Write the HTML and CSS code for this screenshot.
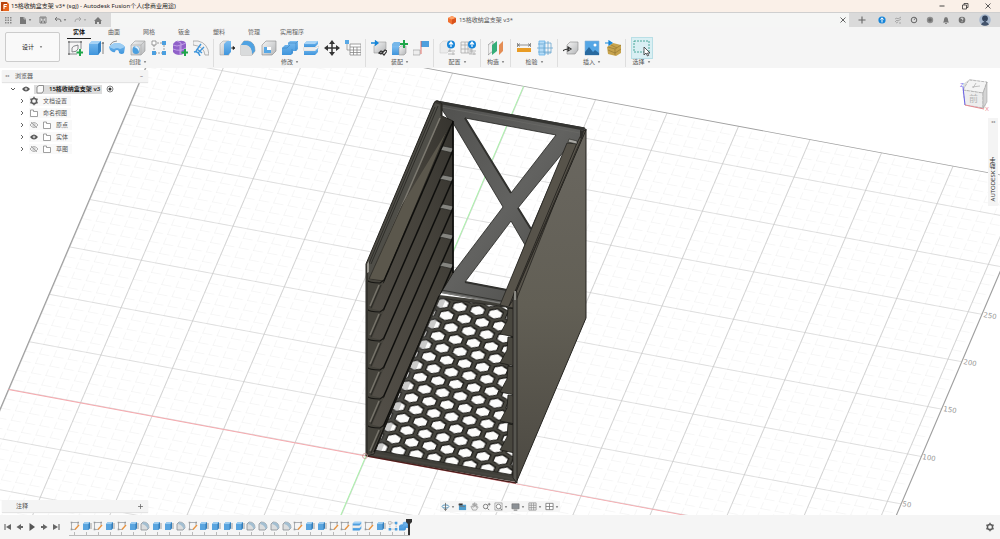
FILE: index.html
```html
<!DOCTYPE html>
<html lang="zh-CN">
<head>
<meta charset="utf-8">
<title>15格收纳盒支架 v3* (sgj) - Autodesk Fusion</title>
<link rel="stylesheet" href="styles.css">
</head>
<body>
<svg class="sprite" aria-hidden="true">
  <defs>
    <linearGradient id="gBlue" x1="0" y1="0" x2="0" y2="1"><stop offset="0" stop-color="#7dbdf0"/><stop offset="1" stop-color="#3f95dc"/></linearGradient>
    <linearGradient id="gGray" x1="0" y1="0" x2="1" y2="1"><stop offset="0" stop-color="#f4f4f4"/><stop offset="1" stop-color="#b4b6b8"/></linearGradient>
  </defs>
  <symbol id="i-sketch" viewBox="0 0 16 16"><path d="M2 2h12v7M2 2v12h8M5 12V8q0-2 6-3v4q-1 3-6 3z" fill="none" stroke="#6c6f73" stroke-width=".8"/><path d="M1 1h2v2H1zM13 1h2v2h-2zM1 13h2v2H1z" fill="#888"/><path d="M13 9v7M9.500 12.500h7" stroke="#1fa64a" stroke-width="2"/></symbol>
  <symbol id="i-extrude" viewBox="0 0 16 16"><path d="M1 4l3-3h9v10l-3 4H1z" fill="url(#gBlue)"/><path d="M1 4h9l3-3H4z" fill="#a5d2f5"/><path d="M10 4v11l3-4V1z" fill="#3482c5"/><path d="M15 14V3M14 4L15 2l1 2" stroke="#555" stroke-width=".7" fill="none"/></symbol>
  <symbol id="i-revolve" viewBox="0 0 16 16"><path d="M0 7q3-4 8-4t8 4l-1 6q-2 2-5 0 0-3-2-3t-2 2q-2 1-5-2z" fill="url(#gBlue)"/><path d="M0 7q3-4 8-4t8 4l-5 2q-3-2-6 0z" fill="#9ccdf3"/><path d="M1 5q2-4 7-4" fill="none" stroke="#666" stroke-width=".7"/></symbol>
  <symbol id="i-hole" viewBox="0 0 16 16"><path d="M1 5l4-4h10v10l-4 4H1z" fill="url(#gGray)" stroke="#999" stroke-width=".6"/><path d="M1 5h10v10M11 5l4-4" fill="none" stroke="#aaa" stroke-width=".6"/><ellipse cx="6" cy="10" rx="3.500" ry="4" fill="#4b9fdf"/><path d="M4 7q4 1 5 5 1-6-3-6z" fill="#e1eef8"/></symbol>
  <symbol id="i-pattern" viewBox="0 0 16 16"><path d="M3 3h10v10H3z" fill="none" stroke="#777" stroke-width=".7" stroke-dasharray="2 1"/><path d="M1 1h4v4H1z" fill="#fff" stroke="#777" stroke-width=".7"/><path d="M11 1h4v4h-4zM1 11h4v4H1zM11 11h4v4h-4z" fill="#4b9fdf"/></symbol>
  <symbol id="i-form" viewBox="0 0 16 16"><path d="M1 4q3-4 6-3 5-1 7 2v8q-3 4-6 4-5 0-7-3z" fill="#9061c9"/><path d="M1 5q4 2 8 0l5-2M8 6v9M5 1l4 2v12M1 9q7 3 13-1" fill="none" stroke="#ceb0ee" stroke-width=".8"/><path d="M13 9v7M9.500 12.500h7" stroke="#1fa64a" stroke-width="2"/></symbol>
  <symbol id="i-flange" viewBox="0 0 16 16"><path d="M0 1h5q10 2 11 14h-4Q11 6 0 5z" fill="#f2f2f2" stroke="#999" stroke-width=".7"/><path d="M1 12q4-1 6 4M3 11l5-7M5 13l6-6M4 9l5 4" fill="none" stroke="#3f96dc" stroke-width="1.400"/></symbol>
  <symbol id="i-press" viewBox="0 0 16 16"><path d="M1 4l3-3h6v14H1z" fill="url(#gGray)" stroke="#999" stroke-width=".5"/><path d="M5 4l3-3h4v11l-3 3H5z" fill="url(#gBlue)"/><path d="M12 8h3M14 6.500L16 8l-2 1.500z" stroke="#222" fill="#222" stroke-width=".8"/></symbol>
  <symbol id="i-fillet" viewBox="0 0 16 16"><path d="M1 5l3-4h4q7 1 7 10l-3 4H1z" fill="url(#gGray)" stroke="#888" stroke-width=".6"/><path d="M4 1h4q7 1 7 10l-3 3Q12 6 5 5l-4 0z" fill="#4fa2e2"/><path d="M1 5h5q6 1 6 10H1z" fill="#d9dbdc"/></symbol>
  <symbol id="i-shell" viewBox="0 0 16 16"><path d="M1 5l4-4h10v10l-4 4H1z" fill="url(#gGray)" stroke="#888" stroke-width=".6"/><path d="M3 7h7v6H3z" fill="#58a8e5"/><path d="M6 7h4v3H6z" fill="#fff"/></symbol>
  <symbol id="i-combine" viewBox="0 0 16 16"><path d="M0 8l3-3h3V3l2-2h8v8l-2 2h-3v2l-2 2H0z" fill="url(#gBlue)"/><path d="M0 8h5l3-3M6 3h8l2-2M14 3v8M10 9v5" fill="none" stroke="#2c78ba" stroke-width=".5"/></symbol>
  <symbol id="i-split" viewBox="0 0 16 16"><path d="M1 4l3-3h11v3l-3 3H1z" fill="url(#gBlue)"/><path d="M1 4h11l3-3H4z" fill="#a8d4f6"/><path d="M0 8h12l4-2v2l-4 2H0z" fill="#fff" stroke="#aaa" stroke-width=".4"/><path d="M1 11h11l3-3v4l-3 3H1z" fill="url(#gBlue)"/></symbol>
  <symbol id="i-move" viewBox="0 0 16 16"><path d="M8 2v12M2 8h12" stroke="#333" stroke-width="1.500"/><path d="M8 0l3 4H5zM8 16l3-4H5zM0 8l4-3v6zM16 8l-4-3v6z" fill="#333"/></symbol>
  <symbol id="i-params" viewBox="0 0 16 16"><path d="M5 4h11v11H5zM5 7h11M5 10h11M5 12.500h11M8.500 7v8M12 7v8" fill="#fff" stroke="#888" stroke-width=".8"/><path d="M0 0h4v4H0z" fill="#58a8e5"/><path d="M2 4v6h3" fill="none" stroke="#888" stroke-width=".7"/></symbol>
  <symbol id="i-insertc" viewBox="0 0 16 16"><path d="M3 6l3-4h9v7l-3 4H3z" fill="url(#gGray)" stroke="#999" stroke-width=".6"/><path d="M0 3h6M4.500 1L7 3 4.500 5z" stroke="#1585d8" fill="#1585d8" stroke-width="1.300"/><path d="M8 13l2-2 2 1-2 2zM11 13l3-3 2 1-3 4z" fill="none" stroke="#333" stroke-width="1.200"/></symbol>
  <symbol id="i-newc" viewBox="0 0 16 16"><path d="M0 4l2-2h6v4H0z" fill="#76b7e9"/><path d="M0 6h7v9H0z" fill="url(#gBlue)"/><path d="M7 8l2-2h5v7l-2 2H7z" fill="url(#gGray)" stroke="#888" stroke-width=".5"/><path d="M12 0v8M8 4h8" stroke="#1fa64a" stroke-width="2"/></symbol>
  <symbol id="i-joint" viewBox="0 0 16 16"><path d="M8 1h8v6H8z" fill="#4f9fdd"/><path d="M0 10h7v5H0z" fill="#eee" stroke="#999" stroke-width=".6"/><path d="M8 1v13" stroke="#e2574c" stroke-width=".8"/></symbol>
  <symbol id="i-config" viewBox="0 0 16 16"><path d="M1 4l3-3h7v9l-3 3H1z" fill="#ececec" stroke="#ccc" stroke-width=".6"/><path d="M9 11h7M9 14h7M11 9v3M14 12v3" stroke="#aaa" stroke-width=".8"/><circle cx="12" cy="4.500" r="4" fill="#1685d9"/><path d="M12 7V2M10 4.500L12 2l2 2.500" fill="none" stroke="#fff" stroke-width="1.200"/></symbol>
  <symbol id="i-config2" viewBox="0 0 16 16"><path d="M1 2h11v11H1zM1 5h11M1 9h11M5 2v11M8 2v11" fill="#f3f3f3" stroke="#aaa" stroke-width=".8"/><path d="M9 11h7M9 14h7M11 9v3M14 12v3" stroke="#aaa" stroke-width=".8"/><circle cx="12" cy="4.500" r="4" fill="#1685d9"/><path d="M12 7V2M10 4.500L12 2l2 2.500" fill="none" stroke="#fff" stroke-width="1.200"/></symbol>
  <symbol id="i-plane" viewBox="0 0 16 16"><path d="M0 5l5-4v10l-5 4z" fill="#eee" stroke="#777" stroke-width=".6"/><path d="M4 5l5-4v10l-5 4z" fill="#35ad78"/><path d="M11 5l4-4v10l-4 4z" fill="#e48d55"/></symbol>
  <symbol id="i-measure" viewBox="0 0 16 16"><path d="M1 8h14v4H1z" fill="#e99c25"/><path d="M1.500 3v4M14.500 3v4M2 5h12M4 3.500L2 5l2 1.500M12 3.500L14 5l-2 1.500" fill="none" stroke="#666" stroke-width=".7"/></symbol>
  <symbol id="i-interf" viewBox="0 0 16 16"><path d="M2 1h6v14H2z" fill="#b6dcf7" stroke="#65b1e8" stroke-width=".8"/><path d="M7 3h7v10H7zM0 8h16M11 1v14M1 4h5M1 12h13" fill="none" stroke="#6ba6cf" stroke-width=".8"/></symbol>
  <symbol id="i-derive" viewBox="0 0 16 16"><path d="M4 5l3-3h8v8l-3 4H4z" fill="url(#gGray)" stroke="#888" stroke-width=".6"/><path d="M0 11q1-2 6-2M5 7l3 2-3 2z" fill="none" stroke="#333" stroke-width="1.200"/></symbol>
  <symbol id="i-image" viewBox="0 0 16 16"><path d="M1 1h14v14H1z" fill="#54a6e5" stroke="#8ab4d4" stroke-width=".6"/><path d="M1 12l4-5 4 5 2-2 4 3v2H1z" fill="#28699f"/><circle cx="11" cy="5" r="1.500" fill="#fff"/></symbol>
  <symbol id="i-mcmaster" viewBox="0 0 16 16"><path d="M2 7l6-4 8 2v8l-5 3-8-2z" fill="#c7a34d"/><path d="M3 7l7 2 6-4M10 9v6M3 10l7 3 6-4M6 5l6 3" fill="none" stroke="#8d702f" stroke-width=".6"/><path d="M0 3h5M4 1l3 2-3 2z" stroke="#1585d8" fill="#1585d8" stroke-width="1.200"/></symbol>
  <symbol id="i-select" viewBox="0 0 20 20"><path d="M2 3h15v11H2z" fill="none" stroke="#299884" stroke-width=".8" stroke-dasharray="2 1"/><path d="M12 9v8l2-2 1.500 3 1.200-.6L15.500 15H18z" fill="#fff" stroke="#333" stroke-width=".8"/></symbol>
  <symbol id="i-grid" viewBox="0 0 10 10"><path d="M2 2h1.500v1.500H2zM4.500 2H6v1.500H4.500zM7 2h1.500v1.500H7zM2 4.500h1.500V6H2zM4.500 4.500H6V6H4.500zM7 4.500h1.500V6H7zM2 7h1.500v1.500H2zM4.500 7H6v1.500H4.500zM7 7h1.500v1.500H7z" fill="#888"/></symbol>
  <symbol id="i-file" viewBox="0 0 10 10"><path d="M2 2h4l2 2v5H2z" fill="#777"/><path d="M6 2v2h2" stroke="#ddd" stroke-width=".6" fill="none"/></symbol>
  <symbol id="i-save" viewBox="0 0 10 10"><path d="M2 2h6v6H2zM4 2v2h2V2M3.500 8V6h3v2" fill="none" stroke="#777" stroke-width=".9"/></symbol>
  <symbol id="i-undo" viewBox="0 0 10 10"><path d="M4 2L2 4l2 2M2 4h4q2 0 2 3" fill="none" stroke="#777"/></symbol>
  <symbol id="i-home" viewBox="0 0 10 10"><path d="M1 6l4-4 4 4H8v3H6V7H4v2H2V6z" fill="#777"/></symbol>
  <symbol id="i-cube" viewBox="0 0 10 10"><path d="M1 3l4-2 4 2v4L5 9.500 1 7z" fill="#f07030"/><path d="M1 3l4 1.500L9 3 5 1z" fill="#ffa268"/><path d="M5 4.500v5L9 7V3z" fill="#d9531c"/></symbol>
  <symbol id="i-eye" viewBox="0 0 10 10"><path d="M1 5q4-5 8 0-4 5-8 0z" fill="#555"/><circle cx="5" cy="5" r="1.300" fill="#fff"/><circle cx="5" cy="5" r=".7" fill="#555"/></symbol>
  <symbol id="i-eyeoff" viewBox="0 0 10 10"><path d="M1 5q4-5 8 0-4 5-8 0zM2 2l6 6" fill="none" stroke="#999" stroke-width=".8"/><circle cx="5" cy="5" r="1.200" fill="none" stroke="#999" stroke-width=".6"/></symbol>
  <symbol id="i-folder" viewBox="0 0 10 10"><path d="M1.500 2h3v1.500h4V8.500h-7z" fill="#fff" stroke="#888" stroke-width=".8"/></symbol>
  <symbol id="i-body" viewBox="0 0 10 10"><path d="M2 3l2-1.500h4.500V7L7 9H2z" fill="#fafafa" stroke="#777" stroke-width=".8"/></symbol>
  <symbol id="i-gear" viewBox="0 0 10 10"><circle cx="5" cy="5" r="2.600" fill="none" stroke="#5c5c5c" stroke-width="1.500"/><path d="M5 .8v1.400M5 7.800v1.400M1.400 2.900l1.200.7M7.400 6.400l1.200.7M1.400 7.100l1.200-.7M7.400 3.600l1.200-.7" stroke="#5c5c5c" stroke-width="1.400"/></symbol>
  <symbol id="i-chev" viewBox="0 0 10 10"><path d="M4 3l2 2-2 2" fill="none" stroke="#555" stroke-width=".9"/></symbol>
  <symbol id="i-down" viewBox="0 0 10 10"><path d="M3 4l2 2 2-2" fill="none" stroke="#444" stroke-width=".9"/></symbol>
  <symbol id="i-caret" viewBox="0 0 4 4"><path d="M.8 1.300h2.400L2 3z" fill="#666"/></symbol>
  <symbol id="i-plus" viewBox="0 0 10 10"><path d="M5 1.500v7M1.500 5h7" stroke="#666" stroke-width="1.100"/></symbol>
  <symbol id="i-x" viewBox="0 0 10 10"><path d="M2.500 2.500l5 5M7.500 2.500l-5 5" stroke="#555" stroke-width=".9"/></symbol>
  <symbol id="t-sk" viewBox="0 0 10 10"><path d="M1.500 1.500h6.500v3M1.500 1.500v7h4" fill="none" stroke="#8c9298" stroke-width=".7"/><path d="M.7.7h1.600v1.600H.7zM7.500.7H9v1.600H7.500zM.7 7.600h1.600v1.600H.7z" fill="#999"/><path d="M5 8.500L9 4" stroke="#e8923e" stroke-width="1.300"/></symbol>
  <symbol id="t-ex" viewBox="0 0 10 10"><path d="M1 3l2-2h5v6L6.500 9H1z" fill="#5aa5df"/><path d="M1 3h5.500L8 1H3z" fill="#9acbf0"/><path d="M6.500 3v6L8 7V1z" fill="#347db8"/><path d="M9 8V2" stroke="#666" stroke-width=".6"/></symbol>
  <symbol id="t-fi" viewBox="0 0 10 10"><path d="M1 3l2-2q6 0 6 6L7 9H1z" fill="#dcdedf" stroke="#7c8388" stroke-width=".7"/><path d="M3 1q6 0 6 6L7.500 8.500Q7 4 2 3z" fill="#a3bfd2"/></symbol>
</svg>

<header class="titlebar">
  <svg class="applogo" viewBox="0 0 8 10"><path d="M0 1h6l2 2v7H0z" fill="#e8641b"/><path d="M0 1h6v2H2v7H0z" fill="#b7430d"/><path d="M3 8V3.500h3M3 5.500h2.500" stroke="#fff" fill="none"/></svg>
  <h1>15格收纳盒支架 v3* (sgj) - Autodesk Fusion个人(非商业用途)</h1>
  <div class="wincontrols">
    <button aria-label="最小化"><svg viewBox="0 0 10 10"><path d="M2.500 5h5" stroke="#333" stroke-width=".9"/></svg></button>
    <button aria-label="还原"><svg viewBox="0 0 10 10"><path d="M2.500 4h4v4h-4zM4 4V2.500h4v4H6.500" fill="none" stroke="#333" stroke-width=".8"/></svg></button>
    <button aria-label="关闭"><svg viewBox="0 0 10 10"><path d="M2.500 2.500l5 5M7.500 2.500l-5 5" stroke="#333" stroke-width=".8"/></svg></button>
  </div>
</header>

<div class="tabbar">
  <div class="quick">
    <button aria-label="数据面板"><svg><use href="#i-grid"/></svg></button>
    <button class="wide" aria-label="文件"><svg><use href="#i-file"/></svg><svg class="caret"><use href="#i-caret"/></svg></button>
    <button aria-label="保存"><svg><use href="#i-save"/></svg></button>
    <button class="wide" aria-label="撤销"><svg><use href="#i-undo"/></svg><svg class="caret"><use href="#i-caret"/></svg></button>
    <button class="wide faint" aria-label="重做"><svg class="flip"><use href="#i-undo"/></svg><svg class="caret"><use href="#i-caret"/></svg></button>
    <button aria-label="主页"><svg><use href="#i-home"/></svg></button>
  </div>
  <div class="doctab">
    <span></span>
    <span class="docname"><svg><use href="#i-cube"/></svg>15格收纳盒支架 v3*</span>
    <button class="closetab" aria-label="关闭选项卡"><svg><use href="#i-x"/></svg></button>
  </div>
  <div class="account">
    <button class="add" aria-label="新建"><svg><use href="#i-plus"/></svg></button>
    <button aria-label="更新"><svg viewBox="0 0 10 10"><circle cx="5" cy="5" r="3.600" fill="#1685d9"/><path d="M5 7.500V3M3.500 4.500L5 2.800l1.500 1.700" stroke="#fff" fill="none"/></svg></button>
    <button aria-label="扩展"><svg viewBox="0 0 10 10"><path d="M2 4l2-1 1 1 3-2M2 7l2-2 1 1 3-2M3 8l2-1M6 8h2" stroke="#999" stroke-width=".8" fill="none"/></svg></button>
    <button aria-label="作业状态"><svg viewBox="0 0 10 10"><circle cx="5" cy="5" r="2.800" fill="none" stroke="#666"/><path d="M5 5l1.500-2" stroke="#666" stroke-width=".8"/></svg></button>
    <button aria-label="在线"><svg viewBox="0 0 10 10"><circle cx="5" cy="5" r="3.200" fill="#8d8d8d"/><circle cx="5" cy="5" r="1.800" fill="#6b6b6b"/></svg></button>
    <button aria-label="通知"><svg viewBox="0 0 10 10"><path d="M2 7.500q1-1 1-3 0-2.500 2-2.500t2 2.500q0 2 1 3zM4.200 8h1.600v1H4.200z" fill="#777"/></svg></button>
    <button aria-label="帮助"><svg viewBox="0 0 10 10"><circle cx="5" cy="5" r="3.300" fill="#717171"/><path d="M4 4q0-1 1-1t1 1q0 .7-1 1.200M5 6.300v.8" stroke="#fff" stroke-width=".8" fill="none"/></svg></button>
    <button class="avatar" aria-label="账户"><svg viewBox="0 0 12 12"><circle cx="6" cy="6" r="5.800" fill="#a9b9ce"/><circle cx="6" cy="4.500" r="2.900" fill="#34445c"/><path d="M2 10.500Q3 8 5 8V6h2v2q2 0 3 2.500-4 2.400-8 0z" fill="#43536b"/></svg></button>
  </div>
</div>

<div class="ribbon">
  <button class="workspace">设计 <svg class="caret"><use href="#i-caret"/></svg></button>
  <div class="tools">
    <nav class="tabs">
      <a href="#" class="active">实体</a><a href="#">曲面</a><a href="#">网格</a><a href="#">钣金</a><a href="#">塑料</a><a href="#">管理</a><a href="#" class="long">实用程序</a>
    </nav>
    <div class="groups">
      <section><div class="icons"><svg><use href="#i-sketch"/></svg><svg><use href="#i-extrude"/></svg><svg><use href="#i-revolve"/></svg><svg><use href="#i-hole"/></svg><svg><use href="#i-pattern"/></svg><svg><use href="#i-form"/></svg><svg><use href="#i-flange"/></svg></div><button>创建<svg class="caret"><use href="#i-caret"/></svg></button></section>
      <section><div class="icons"><svg><use href="#i-press"/></svg><svg><use href="#i-fillet"/></svg><svg><use href="#i-shell"/></svg><svg><use href="#i-combine"/></svg><svg><use href="#i-split"/></svg><svg><use href="#i-move"/></svg><svg><use href="#i-params"/></svg></div><button>修改<svg class="caret"><use href="#i-caret"/></svg></button></section>
      <section><div class="icons"><svg><use href="#i-insertc"/></svg><svg><use href="#i-newc"/></svg><svg><use href="#i-joint"/></svg></div><button>装配<svg class="caret"><use href="#i-caret"/></svg></button></section>
      <section><div class="icons"><svg><use href="#i-config"/></svg><svg><use href="#i-config2"/></svg></div><button>配置<svg class="caret"><use href="#i-caret"/></svg></button></section>
      <section><div class="icons"><svg><use href="#i-plane"/></svg></div><button>构造<svg class="caret"><use href="#i-caret"/></svg></button></section>
      <section><div class="icons"><svg><use href="#i-measure"/></svg><svg><use href="#i-interf"/></svg></div><button>检验<svg class="caret"><use href="#i-caret"/></svg></button></section>
      <section><div class="icons"><svg><use href="#i-derive"/></svg><svg><use href="#i-image"/></svg><svg><use href="#i-mcmaster"/></svg></div><button>插入<svg class="caret"><use href="#i-caret"/></svg></button></section>
      <section class="last"><div class="icons"><svg class="selected"><use href="#i-select"/></svg></div><button>选择<svg class="caret"><use href="#i-caret"/></svg></button></section>
    </div>
  </div>
</div>

<main class="canvas">
  <svg class="scene" viewBox="0 68 1000 447" preserveAspectRatio="xMidYMid slice" role="img" aria-label="收纳盒支架模型">
    <defs>
      <pattern id="minor" width="10" height="10" patternUnits="userSpaceOnUse"><path d="M0 0H10M0 0V10" stroke="#ededed" stroke-width=".7" stroke-dasharray="7 3" fill="none"/></pattern>
      <pattern id="major" width="50" height="50" patternUnits="userSpaceOnUse"><path d="M0 0H50M0 0V50" stroke="#c6c6c6" stroke-width="1" fill="none"/></pattern>
      <pattern id="hex" width="12.5" height="21.65" patternUnits="userSpaceOnUse" patternTransform="matrix(1.426 .28 .405 -.95 442 303.300)">
        <rect width="12.5" height="21.65" fill="#46453e"/>
        <g fill="#1b1a17">
          <path id="hx" d="M0 6L5.200 3V-3L0-6-5.200-3V3z"/>
          <use href="#hx" x="12.5"/><use href="#hx" y="21.65"/><use href="#hx" x="12.5" y="21.65"/><use href="#hx" x="6.250" y="10.825"/>
        </g>
        <g fill="#fcfcfb">
          <path id="hw" d="M0 4.400L4.300 1.900V-2.500L0-5-4.300-2.500V1.900z"/>
          <use href="#hw" x="12.5"/><use href="#hw" y="21.65"/><use href="#hw" x="12.5" y="21.65"/><use href="#hw" x="6.250" y="10.825"/>
        </g>
      </pattern>
      <linearGradient id="wall" x1="0" y1="0" x2="0" y2="1"><stop offset="0" stop-color="#6a6760"/><stop offset=".5" stop-color="#625f55"/><stop offset="1" stop-color="#4c4942"/></linearGradient>
      <linearGradient id="inner" x1="1" y1="0" x2="0" y2="1"><stop offset="0" stop-color="#35332e"/><stop offset=".35" stop-color="#45423b"/><stop offset="1" stop-color="#55514a"/></linearGradient>
      <linearGradient id="back" x1="0" y1="0" x2="1" y2="1"><stop offset="0" stop-color="#50504e"/><stop offset=".5" stop-color="#626260"/><stop offset="1" stop-color="#474744"/></linearGradient>
      <clipPath id="wallclip"><path d="M453 121V273L439 296 374 454 366 456V264z"/></clipPath>
    </defs>
    <rect x="-600" y="-400" width="2200" height="1400" fill="#fff"/>
    <g transform="matrix(1.430 .266 .404 -.948 366 456)">
      <rect x="-250" y="-150" width="610" height="540" fill="url(#minor)"/>
      <rect x="-250" y="-150" width="610" height="540" fill="url(#major)"/>
      <path d="M-250-150V390H360V-150" fill="none" stroke="#a0a0a0" stroke-width=".8"/>
      <path d="M-250 0H360" stroke="#f6a9ae" stroke-width=".9"/>
      <path d="M0-150V390" stroke="#abf3ab" stroke-width=".7"/>
    </g>
    <g class="ticks">
      <text transform="translate(983 317) rotate(10)">250</text>
      <text transform="translate(963 364) rotate(10)">200</text>
      <text transform="translate(943 411) rotate(10)">150</text>
      <text transform="translate(922 459) rotate(10)">100</text>
      <text transform="translate(902 506) rotate(10)">50</text>
    </g>

    <path d="M439 295L507 303 515 309 516 482 367 456 373 450z" fill="#403f39"/>
    <path d="M440 298L506 307 513 313V475L374 450z" fill="url(#hex)" stroke="#24231f" stroke-width=".8"/>
    <path d="M440 296L446 299 381 452 374 451z" fill="#555" opacity=".3"/>
    <path d="M368 453L514 479" stroke="#47453f" stroke-width="2"/>
    <path d="M367 456L516 483" stroke="#4a1f1c" stroke-width="1.500"/>

    <path fill="url(#back)" stroke="#22221f" stroke-width=".8" fill-rule="evenodd" d="M436 101L585 128 584 141 507 304 439 292 452 273 449 120zM465 118L556 135 511 193zM453 123L503 207 453 273zM511 221L525 245 507 290 465 282zM565 150L518 208 531 229z"/>
    <path d="M465 118L511 193M518 208L531 229" stroke="#31312e" stroke-width="2"/>
    <path d="M465 282L507 290" stroke="#31312e" stroke-width="2"/>
    <path d="M439 292L506 304" stroke="#7d7d7a" stroke-width="1.600"/>
    <path d="M441 290L507 302" stroke="#292926" stroke-width=".8"/>
    <path d="M437 102L584 129" stroke="#343431" stroke-width="3"/>
    <path d="M441 107L580 133" stroke="#6b6b68" stroke-width=".6"/>

    <path d="M366 264L434 103Q435 100 438 101L442 104V116L453 121V273L439 296 374 454 366 456z" fill="url(#inner)" stroke="#24231f" stroke-width="1"/>
    <path d="M367 265L435 103 441 105V117L370 280H367z" fill="#4f4e48"/>
    <path d="M438 106L371 264M435 107L368 266" stroke="#272622" stroke-width=".8"/>
    <path d="M440 118L371 277" stroke="#7b786f" stroke-width="1.500"/>
    <path d="M441 116L441 105" stroke="#292824"/>
    <g clip-path="url(#wallclip)">
      <path d="M441 119H452L384 281 369 279z" fill="#5b574c" stroke="#25241f" stroke-width=".7"/>
      <g id="shelf"><path d="M443 146L453 148V153L440 150z" fill="#858580" stroke="#282824" stroke-width=".7"/><path d="M453 150L383 311" stroke="#0e0e0c" stroke-width="1.500"/></g>
      <use href="#shelf" y="29"/><use href="#shelf" y="58"/><use href="#shelf" y="87"/><use href="#shelf" y="116"/><use href="#shelf" y="145"/>
      <path d="M453 121L383 283" stroke="#0e0e0c" stroke-width="1.500"/>
      <g id="cell"><path d="M367 282L369 279 382 282 384 281 372 309H367z" fill="#45433c"/><path d="M367 280Q369 283 380 283L384 280" fill="none" stroke="#171613" stroke-width="1.200"/><path d="M379 285L370 306" stroke="#77746b" stroke-width="1.500"/><path d="M381 285L371 308" stroke="#24231f" stroke-width=".8"/></g>
      <use href="#cell" y="29"/><use href="#cell" y="58"/><use href="#cell" y="87"/><use href="#cell" y="116"/><use href="#cell" y="145"/>
    </g>
    <path d="M453 121V273" stroke="#080807" stroke-width="1.400"/>
    <path d="M439 296L374 452" stroke="#151411" stroke-width="1.300"/>
    <path d="M367 266V456" stroke="#33322d" stroke-width="2"/>
    <path d="M367 273V264L369 261V272z" fill="#9b9992"/>

    <g id="step"><path d="M508 308L515 309V337L500 334 507 321z" fill="#49473f" stroke="#1b1a17" stroke-width=".8"/></g>
    <use href="#step" y="29"/><use href="#step" y="58"/><use href="#step" y="87"/><use href="#step" y="116"/>
    <path d="M586 129V318L516 483V292z" fill="url(#wall)" stroke="#24231f" stroke-width="1"/>
    <path d="M567 143L578 144 513 308 500 305z" fill="#57534a" stroke="#24231f" stroke-width=".8"/>
    <path d="M577 143L583 131 586 130 516 292 513 300 509 306z" fill="#5b574e" stroke="#1d1c19" stroke-width=".8"/>
    <path d="M582 137L513 298" stroke="#292722" stroke-width=".8"/>
    <path d="M569 139L577 141V144L568 142z" fill="#aaa9a5" stroke="#24231f" stroke-width=".6"/>
    <path d="M580 130L584 131 582 139 580 138z" fill="#2d2c29"/>
    <path d="M513 300Q513 292 516 290L517 293V483L513 478z" fill="#575650" stroke="#1e1d1a" stroke-width=".8"/>
    <path d="M515 291V300" stroke="#aaa9a3" stroke-width="1.300"/>
    <circle cx="365" cy="456" r="2.500" fill="none" stroke="#cc9a96" stroke-width=".8"/>

    <g>
      <path d="M963 84L970 79 987 82 986 105 984 109 965 105z" fill="#ddd"/>
      <path d="M963 90L969 80 987 82 983 93z" fill="#f4f4f4" stroke="#999" stroke-width=".6" stroke-dasharray="3 1"/>
      <path d="M963 90L983 93V108L965 105z" fill="#ededed" stroke="#999" stroke-width=".6" stroke-dasharray="3 1"/>
      <path d="M983 93L987 82V102L983 108z" fill="#d4d4d4" stroke="#999" stroke-width=".5"/>
      <path d="M963 87L965 105" stroke="#6b62ea"/><path d="M965 105L984 109" stroke="#e88a92"/>
      <path d="M976 83L973 88M972 87L980 86" stroke="#aaa" stroke-width=".7"/>
      <text class="face" x="969" y="102">前</text><text class="axz" x="960" y="87">Z</text><text class="axx" x="985" y="111">X</text>
    </g>
  </svg>

  <aside class="browser">
    <header><span class="collapse">◂◂</span><h2>浏览器</h2><span class="minus">–</span></header>
    <ul>
      <li class="root"><svg><use href="#i-down"/></svg><svg><use href="#i-eye"/></svg><span class="chosen"><svg><use href="#i-body"/></svg>15格收纳盒支架 v3</span><svg viewBox="0 0 10 10"><circle cx="5" cy="5" r="3" fill="#fff" stroke="#555" stroke-width=".7"/><circle cx="5" cy="5" r="1.500" fill="#333"/></svg></li>
      <li><svg><use href="#i-chev"/></svg><span class="node"><svg><use href="#i-gear"/></svg>文档设置</span></li>
      <li><svg><use href="#i-chev"/></svg><span class="node"><svg><use href="#i-folder"/></svg>命名视图</span></li>
      <li><svg><use href="#i-chev"/></svg><span class="node"><svg><use href="#i-eyeoff"/></svg><svg><use href="#i-folder"/></svg>原点</span></li>
      <li><svg><use href="#i-chev"/></svg><span class="node"><svg><use href="#i-eye"/></svg><svg><use href="#i-folder"/></svg>实体</span></li>
      <li><svg><use href="#i-chev"/></svg><span class="node"><svg><use href="#i-eyeoff"/></svg><svg><use href="#i-folder"/></svg>草图</span></li>
    </ul>
  </aside>

  <aside class="assistant"><span class="expand">◂◂</span><span class="side">AUTODESK 助手</span></aside>

  <div class="notes"><span>注释</span><button aria-label="添加注释"><svg><use href="#i-plus"/></svg></button></div>

  <div class="navbar">
    <button aria-label="动态观察"><svg viewBox="0 0 10 10"><ellipse cx="5" cy="5" rx="3.800" ry="1.800" fill="none" stroke="#4b8fb8"/><path d="M5 1v8M3.500 7.500L5 9.500l1.500-2" stroke="#555" fill="none" stroke-width=".8"/></svg><svg class="caret"><use href="#i-caret"/></svg></button>
    <button aria-label="观察方向"><svg viewBox="0 0 10 10"><path d="M1 3h8v6H1z" fill="#4f9dcd"/><path d="M1 2h4v1.500H1zM2 5h6" stroke="#777" stroke-width=".8"/></svg></button>
    <button aria-label="平移"><svg viewBox="0 0 10 10"><path d="M3 9L1 5l1-.5L3.500 6 3 2h1l.7 3V1h1v4L7 2l.8.3L7 6l1.500-1 .5.5L7 9z" fill="#eee" stroke="#888" stroke-width=".7"/></svg></button>
    <button aria-label="缩放"><svg viewBox="0 0 10 10"><circle cx="4" cy="5" r="2.500" fill="none" stroke="#777"/><path d="M6 7l2 2M8 1v3M6.500 2.500h3" stroke="#777"/></svg></button>
    <button aria-label="适合"><svg viewBox="0 0 10 10"><path d="M1 1h8v8H1z" fill="none" stroke="#888" stroke-width=".7"/><circle cx="5" cy="5" r="2.500" fill="#fff" stroke="#777" stroke-width=".9"/><path d="M7 7l2 2" stroke="#777"/></svg><svg class="caret"><use href="#i-caret"/></svg></button>
    <button aria-label="显示设置"><svg viewBox="0 0 10 10"><path d="M1 2h8v5.500H1z" fill="#8c9196" stroke="#666" stroke-width=".6"/><path d="M3 9h4" stroke="#666"/></svg><svg class="caret"><use href="#i-caret"/></svg></button>
    <button aria-label="栅格"><svg viewBox="0 0 10 10"><path d="M1 1h8v8H1zM1 3.600h8M1 6.300h8M3.600 1v8M6.300 1v8" fill="none" stroke="#888" stroke-width=".8"/></svg><svg class="caret"><use href="#i-caret"/></svg></button>
    <button aria-label="视口"><svg viewBox="0 0 10 10"><path d="M1 1.500h8v7H1zM5 1.500v7M1 5h8" fill="#fff" stroke="#777" stroke-width=".9"/></svg><svg class="caret"><use href="#i-caret"/></svg></button>
  </div>
</main>

<footer class="timeline">
  <div class="playback">
    <button aria-label="到开头"><svg viewBox="0 0 10 10"><path d="M2 2v6" stroke="#555"/><path d="M8 2v6L3 5z" fill="#666"/></svg></button>
    <button aria-label="后退"><svg viewBox="0 0 10 10"><path d="M6 2v6L1.500 5zM6 4h2v2H6z" fill="#666"/></svg></button>
    <button aria-label="播放"><svg viewBox="0 0 10 10"><path d="M2.500 1v8L8 5z" fill="#555"/></svg></button>
    <button aria-label="前进"><svg viewBox="0 0 10 10"><path d="M4 2v6l4.500-3zM2 4h2v2H2z" fill="#666"/></svg></button>
    <button aria-label="到结尾"><svg viewBox="0 0 10 10"><path d="M8 2v6" stroke="#555"/><path d="M2 2v6l5-3z" fill="#666"/></svg></button>
  </div>
  <ol class="features">
    <li><svg><use href="#t-sk"/></svg></li><li><svg><use href="#t-ex"/></svg></li><li><svg><use href="#t-sk"/></svg></li><li><svg><use href="#t-ex"/></svg></li><li><svg><use href="#t-sk"/></svg></li><li><svg><use href="#t-ex"/></svg></li><li><svg><use href="#t-fi"/></svg></li><li><svg><use href="#t-ex"/></svg></li><li><svg><use href="#t-ex"/></svg></li><li><svg><use href="#t-fi"/></svg></li><li><svg><use href="#t-sk"/></svg></li><li><svg><use href="#t-ex"/></svg></li><li><svg><use href="#t-ex"/></svg></li><li><svg><use href="#t-ex"/></svg></li><li><svg><use href="#t-ex"/></svg></li><li><svg><use href="#t-fi"/></svg></li><li><svg><use href="#t-fi"/></svg></li><li><svg><use href="#t-fi"/></svg></li><li><svg><use href="#t-fi"/></svg></li><li><svg><use href="#t-sk"/></svg></li><li><svg><use href="#t-ex"/></svg></li><li><svg><use href="#t-ex"/></svg></li><li><svg><use href="#t-sk"/></svg></li><li><svg><use href="#t-sk"/></svg></li><li><svg><use href="#i-split"/></svg></li><li><svg><use href="#t-sk"/></svg></li><li><svg><use href="#t-ex"/></svg></li><li><svg><use href="#i-pattern"/></svg></li><li><svg><use href="#i-combine"/></svg></li>
  </ol>
  <svg class="marker" viewBox="0 0 6 16"><path d="M0 0h6v3L4 5v11H2V5L0 3z" fill="#333"/></svg>
  <button class="settings" aria-label="设置"><svg><use href="#i-gear"/></svg></button>
</footer>
</body>
</html>
```
FILE: styles.css
```css
* { box-sizing: border-box; }

body {
  margin: 0;
  height: 100vh;
  display: flex;
  flex-direction: column;
  overflow: hidden;
  background: #fff;
  color: #555;
  font: 6px/8px "Noto Sans", "Noto Sans CJK SC", sans-serif;
}

button {
  display: inline-flex;
  align-items: center;
  justify-content: center;
  padding: 0;
  border: 0;
  background: none;
  color: inherit;
  font: inherit;
}

h1, h2 { margin: 0; font: inherit; }
ul, ol { margin: 0; padding: 0; list-style: none; }
svg { display: block; flex: none; width: 10px; height: 10px; }
button svg.caret { width: 4px; height: 4px; }
.sprite { position: absolute; width: 0; height: 0; }

.titlebar {
  display: flex;
  align-items: center;
  height: 12px;
  flex: none;
  padding-left: 1px;
  gap: 2px;
  background: #faf0e8;
  color: #222;
}
.titlebar .applogo { width: 8px; }
.wincontrols { display: flex; gap: 13px; margin-left: auto; padding-right: 7px; }

.tabbar {
  display: flex;
  height: 15px;
  flex: none;
  border-top: 1px solid #cfcfcf;
  background: #dadada;
}
.quick { display: flex; align-items: center; width: 111px; padding-left: 3px; gap: 5px; }
.quick .wide { width: 15px; justify-content: flex-start; }
.quick .faint { opacity: .5; }
.flip { transform: scaleX(-1); }
.doctab {
  flex: 1;
  display: grid;
  grid-template-columns: 1fr auto 1fr;
  align-items: center;
  background: #f5f6f5;
}
.docname { display: flex; align-items: center; gap: 2px; }
.closetab { justify-self: end; margin-right: 1px; }
.account { display: flex; align-items: center; width: 151px; padding-left: 8px; gap: 6px; }
.account .add { margin-right: 4px; }
.account .avatar { margin-left: 6px; }
.avatar svg { width: 12px; height: 12px; }

.ribbon {
  display: flex;
  flex: none;
  height: 41px;
  padding-left: 5px;
  background: #f5f5f5;
}
.workspace {
  width: 55px;
  height: 30px;
  margin-top: 5px;
  gap: 5px;
  border: 1px solid #ccc;
  border-radius: 2px;
  background: #f9f9f9;
  color: #222;
}
.tools { display: flex; flex-direction: column; }
.tabs { display: flex; padding-left: 7px; gap: 11px; }
.tabs a {
  width: 24px;
  height: 12px;
  padding-top: 1px;
  border-bottom: 1px solid transparent;
  color: #666;
  text-align: center;
  text-decoration: none;
}
.tabs .long { width: 30px; }
.tabs .active { border-color: #222; color: #111; font-weight: 600; }

.groups { display: flex; padding-left: 2px; }
.groups section {
  display: flex;
  flex-direction: column;
  align-items: center;
  min-width: 30px;
  height: 28px;
  padding: 0 4px 0 5px;
  border-right: 1px solid #dedede;
}
.groups .last { border-right: 0; }
.icons { display: flex; gap: 5px; height: 17px; align-items: center; }
.icons svg { width: 16px; height: 16px; }
.icons .selected { width: 20px; height: 20px; background: #d9eff3; outline: 1px solid #b9dfe6; }
.groups button { gap: 2px; margin-top: 2px; }

.canvas { position: relative; flex: 1; min-height: 0; overflow: hidden; }
.scene { position: absolute; inset: 0; width: 100%; height: 100%; }
.ticks text { font: 7px "DejaVu Sans", sans-serif; fill: #999; }
.face { font: 9px "Noto Sans CJK SC", sans-serif; fill: #b5b5b5; }
.axz { font: 6px "Liberation Sans", sans-serif; fill: #7c74ee; }
.axx { font: 6px "Liberation Sans", sans-serif; fill: #ee8c96; }

.browser { position: absolute; left: 2px; top: 2px; width: 146px; }
.browser header {
  display: flex;
  align-items: center;
  height: 12px;
  padding: 0 5px 0 3px;
  background: #f4f4f4;
  box-shadow: 0 1px 1px #e4e4e4;
}
.collapse, .expand { font: 4px/6px "DejaVu Sans", sans-serif; color: #888; }
.browser h2 { margin-left: 6px; }
.minus { margin-left: auto; }
.browser ul { padding-top: 1px; }
.browser li { display: flex; align-items: center; height: 12px; padding-left: 15px; gap: 2px; }
.browser .root { padding-left: 6px; gap: 3px; color: #222; font-weight: 600; }
.chosen { display: flex; align-items: center; gap: 4px; height: 9px; padding: 0 2px 0 1px; background: #dcdcdc; }
.node { display: flex; align-items: center; gap: 3px; height: 10px; padding-right: 4px; background: #f9f9f9; }
.node svg:last-of-type { margin-right: 1px; }

.assistant {
  position: absolute;
  right: 2px;
  top: 50px;
  width: 10px;
  height: 88px;
  display: flex;
  flex-direction: column;
  align-items: center;
  justify-content: space-between;
  padding: 1px 0 5px;
  background: #f4f4f4;
  color: #333;
}
.side { writing-mode: vertical-rl; transform: rotate(180deg); }

.notes {
  position: absolute;
  left: 2px;
  bottom: 3px;
  width: 146px;
  height: 12px;
  display: flex;
  align-items: center;
  justify-content: space-between;
  padding: 0 4px 0 14px;
  background: #f4f4f4;
  box-shadow: 0 1px 1px #e4e4e4;
}
.notes svg { width: 7px; height: 7px; }

.navbar {
  position: absolute;
  left: 50%;
  bottom: 3px;
  transform: translateX(-50%);
  display: flex;
  gap: 3px;
  padding: 1px 1px;
  background: #f5f5f5;
}
.navbar button { gap: 1px; }
.navbar svg { width: 9px; height: 9px; }

.timeline {
  display: flex;
  align-items: center;
  flex: none;
  height: 24px;
  padding: 0 5px 0 3px;
  background: #f5f5f5;
}
.playback { display: flex; gap: 2px; width: 66px; }
.features { display: flex; width: 341px; height: 17px; padding-top: 2px; border-bottom: 1px solid #bbb; }
.features li {
  flex: 1;
  display: flex;
  flex-direction: column;
  align-items: center;
  justify-content: space-between;
}
.features li::after { content: ""; width: 1px; height: 3px; background: #bbb; }
.features svg { width: 10px; height: 10px; }
.marker { width: 6px; height: 16px; margin-left: -4px; }
.settings { margin-left: auto; }
```
